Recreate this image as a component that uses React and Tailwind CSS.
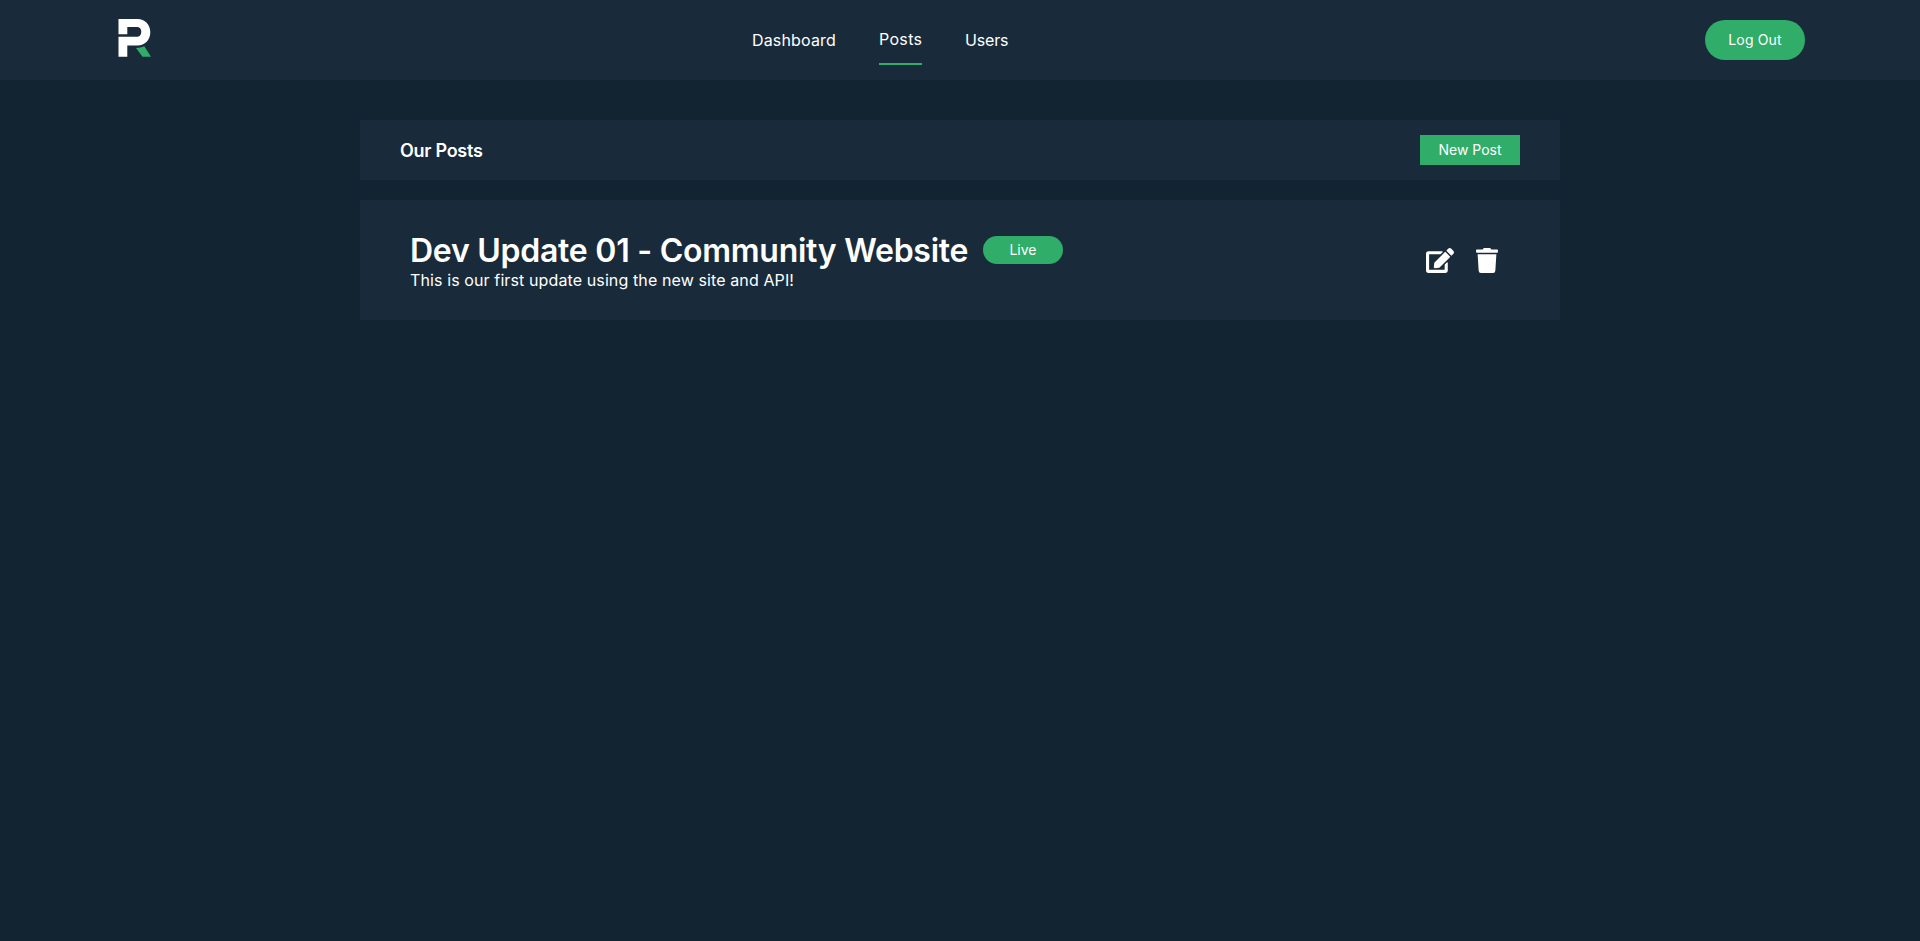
import { FaEdit, FaTrash } from 'react-icons/fa';

function Logo() {
  return (
    <svg viewBox="0 0 33 38" className="block h-[38px] w-[33px]" aria-label="Logo">
      <path fill="#fff" d="M0.500 0H19.500C27 0 32.300 5.800 32.300 13.300C32.300 20.800 27 26.600 19.500 26.600H9.300V37.700H0.500V17.800H19C21.600 17.800 23.300 15.800 23.300 12.800C23.300 9.800 21.600 7.900 19 7.900H9.300V15.300H0.500Z" />
      <path fill="#30ad68" d="M18 28.900Q23 28.800 26.300 27.300L33 37.700H24.500Z" />
    </svg>
  );
}

function Header() {
  return (
    <header className="grid h-20 grid-cols-[752px_1fr_215px] bg-[#192b3b]">
      <div className="pt-[19px] pl-[118px]"><Logo /></div>
      <nav className="flex items-start leading-6">
        <a className="w-[126px] pt-7 tracking-[0.01em]">Dashboard</a>
        <a className="ml-px h-[65px] w-[43px] border-b-2 border-[#30ad68] pt-[27px] tracking-[0.02em]">Posts</a>
        <a className="ml-[43px] pt-7 tracking-[-0.01em]">Users</a>
      </nav>
      <div className="pt-5">
        <button className="block h-10 w-[100px] rounded-full bg-[#30ad68] text-sm tracking-[0.01em]">Log Out</button>
      </div>
    </header>
  );
}

export default function App() {
  return (
    <div className="min-h-screen bg-[#122332] font-['Inter','Open_Sans',sans-serif] text-white">
      <Header />
      <main className="mx-auto flex w-[1200px] flex-col gap-5 pt-10">
        <section className="flex h-[60px] items-center justify-between bg-[#192b3b] px-10">
          <h2 className="pt-px text-[18px] font-semibold tracking-[-0.015em]">Our Posts</h2>
          <button className="h-[30px] w-[100px] bg-[#30ad68] text-sm">New Post</button>
        </section>
        <article className="flex h-[120px] items-center justify-between bg-[#192b3b] pr-[61px] pl-[50px]">
          <div>
            <div className="flex items-center gap-[15px]">
              <h1 className="w-[558px] pt-0.5 text-[32px] leading-[38px] font-semibold tracking-[-0.008em] whitespace-nowrap">Dev Update 01 - Community Website</h1>
              <span className="flex h-7 w-20 items-center justify-center rounded-full bg-[#30ad68] text-sm">Live</span>
            </div>
            <p className="text-base leading-5 tracking-[0.007em]">This is our first update using the new site and API!</p>
          </div>
          <div className="flex items-center gap-[22px] pr-px">
            <FaEdit className="h-[25px] w-7" />
            <FaTrash className="h-[25px] w-[22px]" />
          </div>
        </article>
      </main>
    </div>
  );
}
